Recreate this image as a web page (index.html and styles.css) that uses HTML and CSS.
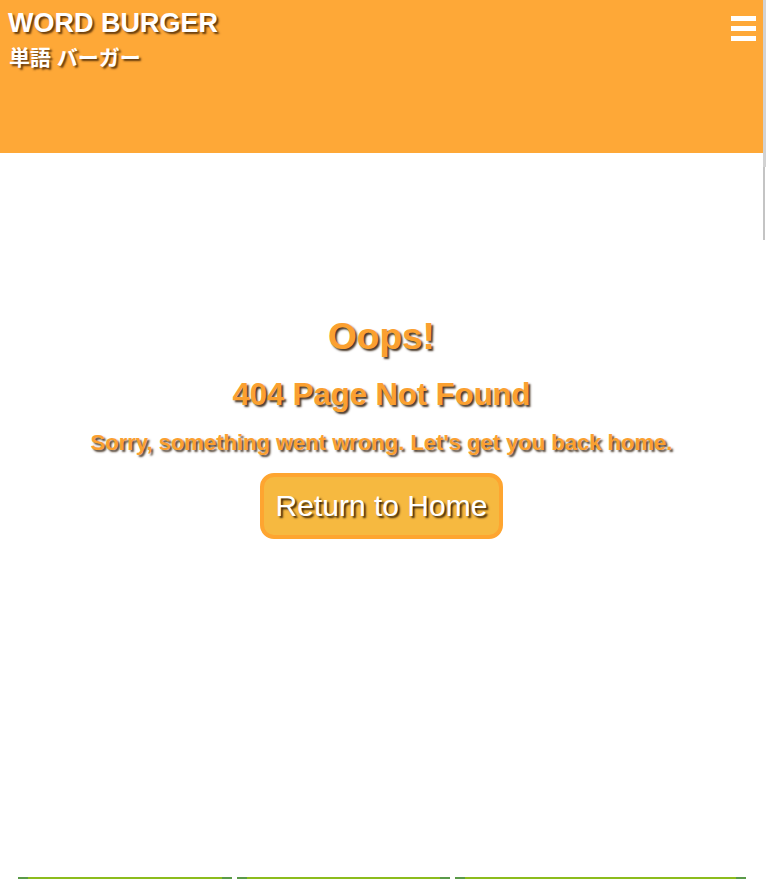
FILE: index.html
```html
<!DOCTYPE html>
<html lang="ja">
<head>
<meta charset="utf-8">
<title>404 | Word Burger</title>
<link rel="stylesheet" href="styles.css">
</head>
<body>
<div class="page">
  <header class="site-header">
    <div class="brand">
      <h1 class="brand-title">WORD BURGER</h1>
      <p class="brand-sub">単語 バーガー</p>
    </div>
    <button class="menu-toggle" aria-label="Menu">
      <span class="bar"></span><span class="bar"></span><span class="bar"></span>
    </button>
  </header>
  <main class="not-found">
    <h2 class="oops">Oops!</h2>
    <h3 class="code">404 Page Not Found</h3>
    <p class="message">Sorry, something went wrong. Let's get you back home.</p>
    <a class="home-btn" href="#">Return to Home</a>
  </main>
  <section class="cards">
    <div class="card card-a"><div class="card-img"></div></div>
    <div class="card card-b"><div class="card-img"></div></div>
    <div class="card card-c"><div class="card-img"></div></div>
  </section>
</div>
<div class="rail" aria-hidden="true">
  <div class="rail-thumb"></div>
  <div class="rail-line"></div>
</div>
</body>
</html>
```
FILE: styles.css
```css
body {
  margin: 0;
  font-family: "Liberation Sans", Arial, "Noto Sans CJK JP", sans-serif;
  background: #ffffff;
  display: flex;
  align-items: flex-start;
}

.page {
  flex: 1;
  min-width: 0;
}

.rail {
  width: 3px;
  flex: none;
  display: flex;
  flex-direction: column;
}

.rail-thumb {
  height: 167px;
  background: #d2d2d2;
}

.rail-line {
  height: 73px;
  width: 2px;
  background: #c4c4c4;
}

.site-header {
  box-sizing: border-box;
  height: 153px;
  background: #FEA837;
  display: flex;
  justify-content: space-between;
  align-items: flex-start;
  padding: 8px 7px 0 8px;
}

.brand-title {
  margin: 0;
  font-size: 27px;
  font-weight: bold;
  color: #ffffff;
  line-height: 31px;
  text-shadow: 2px 2px 2px rgba(60, 30, 0, 0.8);
}

.brand-sub {
  margin: 5px 0 0 1px;
  font-family: "Liberation Sans", "Noto Sans CJK JP", sans-serif;
  font-size: 21px;
  font-weight: bold;
  color: #ffffff;
  line-height: 27px;
  text-shadow: 2px 2px 2px rgba(60, 30, 0, 0.8);
}

.menu-toggle {
  margin: 8px 0 0 0;
  padding: 0;
  border: 0;
  background: transparent;
  display: flex;
  flex-direction: column;
  gap: 5px;
  cursor: pointer;
}

.bar {
  display: block;
  width: 25px;
  height: 5px;
  background: #ffffff;
}

.not-found {
  box-sizing: border-box;
  height: 724px;
  padding-top: 162px;
  display: flex;
  flex-direction: column;
  align-items: center;
  text-align: center;
  color: #FBA030;
}

.oops {
  margin: 0;
  font-size: 37px;
  font-weight: bold;
  line-height: 43px;
  text-shadow: 2px 2px 2px rgba(40, 20, 0, 0.85);
}

.code {
  margin: 19px 0 0 0;
  font-size: 31px;
  font-weight: bold;
  line-height: 36px;
  text-shadow: 2px 2px 2px rgba(40, 20, 0, 0.85);
}

.message {
  margin: 17px 0 0 0;
  font-size: 22px;
  font-weight: bold;
  line-height: 25px;
  text-shadow: 2px 2px 2px rgba(40, 20, 0, 0.8);
}

.home-btn {
  margin-top: 18px;
  box-sizing: border-box;
  height: 66px;
  padding: 0 12px;
  display: flex;
  align-items: center;
  background: #F6B940;
  border: 4px solid #FEA530;
  border-radius: 14px;
  color: #ffffff;
  font-size: 30px;
  text-decoration: none;
  text-shadow: 2px 2px 2px rgba(40, 20, 0, 0.9);
}

.cards {
  display: flex;
  gap: 5px;
  padding: 0 17px 3600px 18px;
}

.card-a { width: 214px; }
.card-b { width: 213px; }
.card-c { width: 291px; }

.card-img {
  height: 200px;
  background: linear-gradient(to right, #5A9A48 0, #5A9A48 10px, #8CBC1C 10px, #8CBC1C calc(100% - 10px), #5A9A48 calc(100% - 10px));
}
```
